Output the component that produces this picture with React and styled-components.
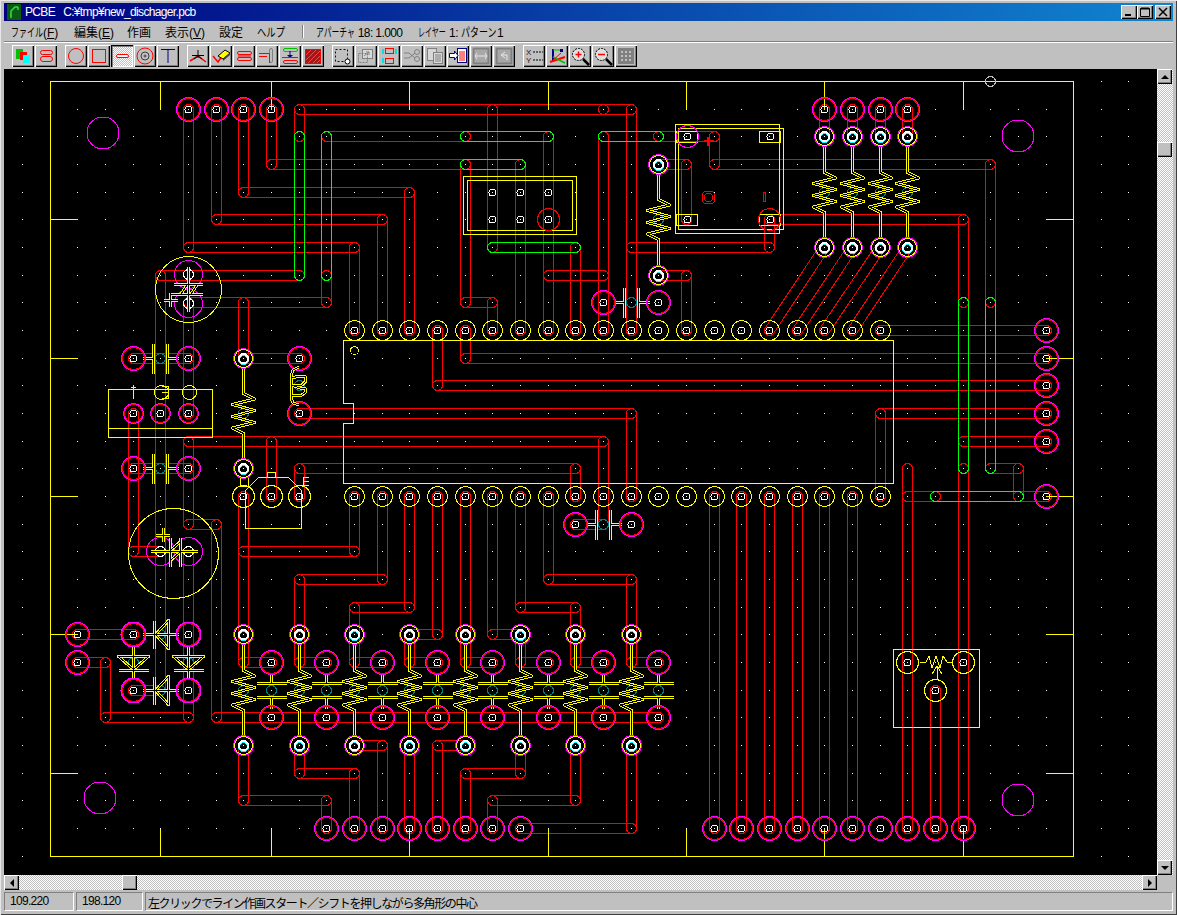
import React from 'react';
import styled, { createGlobalStyle } from 'styled-components';

const GlobalStyle = createGlobalStyle`
  html, body {
    margin: 0;
    padding: 0;
    background: #c0c0c0;
    overflow: hidden;
  }
  * { box-sizing: border-box; }
`;

const UI_FONT = `"Liberation Sans", "Noto Sans CJK JP", sans-serif`;
const CHECKER = `repeating-conic-gradient(#c0c0c0 0 25%, #ffffff 0 50%) 0 0 / 2px 2px`;

const Frame = styled.div`
  width: 1177px;
  height: 915px;
  padding: 3px 4px 4px;
  background: #c0c0c0;
  box-shadow: inset 1px 1px 0 #e8e8e8, inset -1px -1px 0 #404040;
  font: 12px ${UI_FONT};
  color: #000;
  display: flex;
  flex-direction: column;
`;

const TitleBar = styled.div`
  height: 18px;
  display: flex;
  align-items: center;
  padding: 0 2px 0 3px;
  color: #fff;
  background: linear-gradient(90deg, #000080, #1084d0);
`;

const TitleIcon = styled.svg`
  width: 14px;
  height: 16px;
  flex: none;
  margin-right: 4px;
`;

const TitleText = styled.span`
  white-space: pre;
  font-size: 12px;
  letter-spacing: -0.65px;
  flex: 1;
`;

const WinButton = styled.button`
  width: 16px;
  height: 14px;
  padding: 0;
  margin-left: ${p => p.$gap || 0}px;
  border: 0;
  background: #c0c0c0;
  display: flex;
  align-items: center;
  justify-content: center;
  box-shadow: inset 1px 1px 0 #fff, inset -1px -1px 0 #000, inset -2px -2px 0 #808080;
`;

const MenuBar = styled.div`
  height: 20px;
  display: flex;
  align-items: center;
  padding-left: 7px;
  white-space: nowrap;
`;

const MenuItem = styled.span`
  width: ${p => p.$width}px;
  flex: none;
  letter-spacing: ${p => p.$spacing || 0}px;
`;

/* the reference's katakana is much narrower than any installed face */
const Kana = styled.span`
  display: inline-block;
  width: ${p => p.$width}px;
  letter-spacing: 0;
  transform: scaleX(${p => p.$width / (p.$chars * 12)});
  transform-origin: left center;
`;

const MenuDivider = styled.span`
  width: 2px;
  height: 13px;
  margin-right: 12px;
  flex: none;
  border-left: 1px solid #808080;
  border-right: 1px solid #fff;
`;

const Rule = styled.div`
  height: 2px;
  border-top: 1px solid #808080;
  border-bottom: 1px solid #fff;
`;

const Toolbar = styled.div`
  height: 26px;
  display: flex;
  align-items: center;
  gap: 8px;
  padding-left: 8px;
`;

const ToolGroup = styled.div`
  display: flex;
  gap: 1px;
`;

const ToolButton = styled.div`
  width: 22px;
  height: 22px;
  display: flex;
  align-items: center;
  justify-content: center;
  background: ${p => (p.$pressed ? CHECKER : '#c0c0c0')};
  box-shadow: ${p =>
    p.$pressed
      ? 'inset 1px 1px 0 #000, inset 2px 2px 0 #808080, inset -1px -1px 0 #fff'
      : 'inset 1px 1px 0 #fff, inset -1px -1px 0 #000, inset -2px -2px 0 #808080'};
`;

const ToolSvg = styled.svg`
  width: 22px;
  height: 22px;
  display: block;
`;

const Workspace = styled.div`
  display: grid;
  grid-template-columns: 1153px 16px;
  grid-template-rows: 806px 15px;
`;

const Canvas = styled.div`
  background: #000;
  overflow: hidden;
`;

const Board = styled.svg`
  display: block;
  width: 1153px;
  height: 806px;
  shape-rendering: crispEdges;
`;

const ScrollBar = styled.div`
  display: flex;
  flex-direction: ${p => (p.$vertical ? 'column' : 'row')};
  background: ${CHECKER};
`;

const ScrollTrack = styled.div`
  flex: 1;
  display: flex;
  flex-direction: ${p => (p.$vertical ? 'column' : 'row')};
  padding: ${p => (p.$vertical ? `${p.$offset}px 0 0 0` : `0 0 0 ${p.$offset}px`)};
`;

const ScrollThumb = styled.div`
  width: 15px;
  height: 15px;
  flex: none;
  background: #c0c0c0;
  box-shadow: inset 1px 1px 0 #fff, inset -1px -1px 0 #000, inset -2px -2px 0 #808080;
`;

const ScrollButton = styled(ScrollThumb)`
  display: flex;
  align-items: center;
  justify-content: center;
  &::before {
    content: '';
    width: 0;
    height: 0;
    border-style: solid;
    border-color: transparent;
    ${p => p.$dir === 'up' && 'border-width: 0 4px 4px; border-bottom-color: #000;'}
    ${p => p.$dir === 'down' && 'border-width: 4px 4px 0; border-top-color: #000;'}
    ${p => p.$dir === 'left' && 'border-width: 4px 4px 4px 0; border-right-color: #000;'}
    ${p => p.$dir === 'right' && 'border-width: 4px 0 4px 4px; border-left-color: #000;'}
  }
`;

const Corner = styled.div`
  background: #c0c0c0;
`;

const StatusBar = styled.div`
  height: 19px;
  margin-top: 2px;
  display: flex;
  gap: 2px;
`;

const StatusPanel = styled.div`
  width: ${p => (p.$width ? `${p.$width}px` : 'auto')};
  flex: ${p => (p.$width ? 'none' : 1)};
  padding: 1px 0 0 ${p => p.$pad || 2}px;
  letter-spacing: ${p => p.$spacing || 0}px;
  white-space: nowrap;
  overflow: hidden;
  border-top: 1px solid #808080;
  border-left: 1px solid #808080;
  border-right: 1px solid #fff;
  border-bottom: 1px solid #fff;
`;

/* ---------- toolbar icons ---------- */

const R = '#ff0000';
const N = '#000080';
const G = '#808080';

const icons = {
  layers: (
    <>
      <rect x="4" y="4" width="7" height="10" fill="#00c000" />
      <rect x="8" y="7" width="7" height="8" fill={R} />
      <rect x="11" y="10" width="7" height="8" fill="#00ffff" />
    </>
  ),
  ovals: (
    <g fill="none" stroke={R}>
      <rect x="5.5" y="5.5" width="12" height="4" rx="2" />
      <rect x="5.5" y="11.5" width="12" height="5" rx="2.5" />
    </g>
  ),
  circle: <circle cx="11" cy="11" r="7.5" fill="none" stroke={R} />,
  square: <rect x="4.5" y="4.5" width="13" height="13" fill="none" stroke={R} />,
  track: <rect x="5.5" y="9.5" width="12" height="3" rx="1.5" fill="#fff" stroke={R} />,
  target: (
    <g fill="none">
      <circle cx="11" cy="11" r="8" stroke={R} />
      <circle cx="11" cy="11" r="4" stroke="#404040" />
      <circle cx="11" cy="11" r="1" stroke="#404040" />
    </g>
  ),
  text: <path d="M4 4.5H18M11 4V18" stroke={N} fill="none" />,
  corner: (
    <g fill="none">
      <path d="M3 16L11 11L19 17" stroke={R} strokeWidth="1.5" />
      <path d="M11 5V13M5 10.5H17M11 11L7 14M11 11L15 14" stroke="#000" />
    </g>
  ),
  erase: (
    <g>
      <path d="M3 11L8 17L12 11" fill="none" stroke={R} strokeWidth="1.5" />
      <path d="M8 11L15 5L20 8L13 14Z" fill="#ffff00" stroke="#000" />
      <path d="M13 14L20 8V10L13 16Z" fill="#404040" />
    </g>
  ),
  lines: (
    <g fill="none" stroke={R}>
      <rect x="4.5" y="6.5" width="14" height="3" rx="1.5" />
      <rect x="4.5" y="12.5" width="14" height="3" rx="1.5" />
      <path d="M5 11H18" />
    </g>
  ),
  bend: (
    <g fill="none">
      <rect x="13.5" y="3.5" width="3" height="14" rx="1.5" stroke={G} />
      <path d="M3 8.5H13.5V18M3 11.5H11" stroke={R} />
    </g>
  ),
  swap: (
    <g fill="none">
      <rect x="4.5" y="3.5" width="14" height="3" rx="1.5" stroke="#00c000" />
      <path d="M11 6V12" stroke={N} />
      <path d="M8 10H14L11 13Z" fill={N} />
      <path d="M3 12.5H19" stroke={R} />
      <rect x="4.5" y="15.5" width="14" height="3" rx="1.5" stroke={R} />
    </g>
  ),
  hatch: (
    <g fill="none">
      <rect x="3.5" y="4.5" width="15" height="14" fill="#a01818" stroke={R} />
      <path d="M4 10L9 5M4 15L14 5M6 18L18 6M11 18L18 11M15 18L18 15" stroke="#ff4040" />
    </g>
  ),
  select: (
    <g fill="none">
      <rect x="3.5" y="4.5" width="12" height="12" stroke={N} strokeDasharray="2 2" />
      <circle cx="15.5" cy="16.5" r="2.5" fill="#fff" stroke="#000" />
    </g>
  ),
  move: (
    <g fill="none" stroke={G}>
      <rect x="7.5" y="4.5" width="10" height="9" fill="#fff" fillOpacity=".4" />
      <rect x="3.5" y="8.5" width="9" height="9" strokeDasharray="2 1" />
      <path d="M9 11L14 7M11 7H14V10" />
    </g>
  ),
  mirror: (
    <g fill="none">
      <rect x="7.5" y="3.5" width="8" height="5" stroke={R} />
      <rect x="7.5" y="13.5" width="8" height="5" stroke={R} />
      <path d="M5 4V9M5 13V18M18 4V9" stroke="#00e0e0" strokeWidth="2" />
    </g>
  ),
  cut: (
    <g fill="none" stroke={G}>
      <circle cx="16" cy="7" r="2.5" />
      <circle cx="16" cy="14" r="2.5" />
      <path d="M3 8H8L14 13M3 13H8L14 8" />
    </g>
  ),
  copy: (
    <g fill="#d8d8d8" stroke={G}>
      <rect x="3.5" y="3.5" width="9" height="12" />
      <rect x="9.5" y="7.5" width="9" height="11" />
      <path d="M11 10H17M11 12H17M11 14H17M11 16H17" />
    </g>
  ),
  paste: (
    <g>
      <rect x="10.5" y="3.5" width="9" height="14" fill="#fff" stroke={N} />
      <path d="M12 7H18M12 9H18M12 11H18M12 13H18M12 15H18" stroke={R} />
      <path d="M2.5 8.5H7.5V6L11 10.5L7.5 15V12.5H2.5Z" fill="#fff" stroke={N} />
    </g>
  ),
  flip: (
    <g fill="none">
      <rect x="3.5" y="3.5" width="15" height="15" fill="#a8a8a8" stroke={G} strokeWidth="2" />
      <path d="M5 11H17M7 8L5 11L7 14M15 8L17 11L15 14" stroke="#e8e8e8" />
    </g>
  ),
  undo: (
    <g fill="none">
      <rect x="3.5" y="3.5" width="15" height="15" fill="#a8a8a8" stroke={G} strokeWidth="2" />
      <path d="M12 7L8 10L12 13M9 10H14V15" stroke="#e8e8e8" />
    </g>
  ),
  coords: (
    <g>
      <text x="3" y="10" fontFamily="Liberation Sans" fontSize="8" fill="#202020">X</text>
      <text x="3" y="18" fontFamily="Liberation Sans" fontSize="8" fill="#202020">Y</text>
      <path d="M10 7H20M10 15H20" stroke="#000" strokeDasharray="2 1" />
    </g>
  ),
  axes: (
    <g fill="none">
      <path d="M7 4V16" stroke={N} strokeWidth="2" />
      <path d="M7 5H15" stroke="#00c000" />
      <path d="M4 17L19 12" stroke={R} strokeWidth="2" />
      <path d="M7 12L19 18" stroke="#00c000" strokeWidth="1.5" />
      <path d="M5 17L15 8" stroke={R} />
      <rect x="14" y="4" width="3" height="3" fill={N} />
    </g>
  ),
  zoomIn: (
    <g fill="none">
      <circle cx="9.5" cy="9.5" r="6" fill="#e0e0e0" stroke="#000" strokeDasharray="2 1" />
      <path d="M6.5 9.5H12.5M9.5 6.5V12.5" stroke={R} strokeWidth="1.5" />
      <path d="M14 14L20 20" stroke="#000" strokeWidth="2.5" />
    </g>
  ),
  zoomOut: (
    <g fill="none">
      <circle cx="9.5" cy="9.5" r="6" fill="#e0e0e0" stroke="#000" strokeDasharray="2 1" />
      <path d="M6 9.5H13" stroke={R} strokeWidth="1.5" />
      <path d="M14 14L20 20" stroke="#000" strokeWidth="2.5" />
    </g>
  ),
  grid: (
    <g>
      <rect x="3" y="3" width="16" height="16" fill="#808080" />
      <path d="M6 6h2v2h-2zM10 6h2v2h-2zM14 6h2v2h-2zM6 10h2v2h-2zM10 10h2v2h-2zM14 10h2v2h-2zM6 14h2v2h-2zM10 14h2v2h-2zM14 14h2v2h-2z" fill="#c0c0c0" />
    </g>
  ),
};

const TOOL_GROUPS = [
  ['layers', 'ovals'],
  ['circle', 'square', 'track', 'target', 'text'],
  ['corner', 'erase', 'lines', 'bend', 'swap', 'hatch'],
  ['select', 'move', 'mirror', 'cut', 'copy', 'paste', 'flip', 'undo'],
  ['coords', 'axes', 'zoomIn', 'zoomOut', 'grid'],
];

/* ---------- board data, in grid units of the dotted grid ---------- */

const X = i => Math.floor(354.5 + 27.66 * i) + 0.5;
const Y = j => Math.floor(330.5 + 27.67 * j) + 0.5;

const RED_TRACKS = [
  [[-6, -8], [-6, -3], [0, -3], [0, 0]],
  [[-5, -8], [-5, -4], [1, -4], [1, 0]],
  [[-4, -8], [-4, -5], [2, -5], [2, 0]],
  [[-3, -8], [-3, -6], [4, -6], [4, -1], [5, -1], [5, 0]],
  [[-2, -7], [-2, -8], [10, -8], [10, 0]],
  [[9, -8], [9, -8]],
  [[-1, -7], [4, -7]],
  [[7, -7], [7, 0]],
  [[6, -6], [6, 0]],
  [[-7, -2], [-2, -2]],
  [[-7, -2], [-7, 13], [-8, 13]],
  [[-6, -1], [-1, -1], [-1, -2]],
  [[-6, -1], [-6, 3]],
  [[-4, -1], [-4, 1], [-2, 1]],
  [[-8, 1], [-6, 1]],
  [[-8, 5], [-6, 5]],
  [[-8, 3], [-8, 8], [-7, 8]],
  [[-6, 4], [9, 4], [9, 7], [8, 7]],
  [[-6, 4], [-6, 7], [-5, 7], [-5, 14], [11, 14]],
  [[-2, 3], [10, 3], [10, 6]],
  [[-2, 5], [8, 5], [8, 6]],
  [[-3, 4], [-3, 6]],
  [[-2, 5], [-2, 6]],
  [[0, 6], [0, 8], [-4, 8]],
  [[-4, 6], [-4, 11]],
  [[1, 6], [1, 9], [-2, 9], [-2, 11]],
  [[2, 6], [2, 10], [0, 10], [0, 11]],
  [[3, 6], [3, 11], [2, 11]],
  [[4, 6], [4, 11]],
  [[5, 6], [5, 11], [6, 11]],
  [[6, 6], [6, 10], [8, 10], [8, 11]],
  [[7, 6], [7, 9], [10, 9], [10, 11]],
  [[-10, 11], [-8, 11]],
  [[-10, 12], [-9, 12], [-9, 14], [-6, 14], [-6, 8]],
  [[-4, 15], [-4, 17], [-1, 17], [-1, 18]],
  [[-2, 15], [-2, 16], [0, 16], [0, 18]],
  [[0, 15], [1, 15], [1, 18]],
  [[2, 15], [2, 18]],
  [[4, 15], [3, 15], [3, 18]],
  [[6, 15], [6, 16], [4, 16], [4, 18]],
  [[8, 15], [8, 17], [5, 17], [5, 18]],
  [[10, 15], [10, 18], [6, 18]],
  [[11, -7], [13, -7], [13, -6], [23, -6], [23, -1]],
  [[15, -4], [22, -4], [22, -1]],
  [[15, -4], [15, -3], [10, -3]],
  [[11, -6], [12, -6], [12, -4]],
  [[11, -2], [12, -2], [12, 0]],
  [[7, -2], [9, -2]],
  [[8, -3], [8, 0]],
  [[5, -8], [5, -3]],
  [[9, -7], [9, 0]],
  [[4, 0], [4, 1], [25, 1]],
  [[3, 0], [3, 2], [25, 2]],
  [[19, 0], [25, 0]],
  [[25, 3], [19, 3], [19, 6]],
  [[22, 4], [25, 4]],
  [[23, 5], [24, 5], [24, 6], [25, 6]],
  [[20, 6], [21, 6]],
  [[20, 5], [20, 18]],
  [[22, 5], [22, 18]],
  [[21, 13], [21, 18]],
  [[13, 6], [13, 18]],
  [[14, 6], [14, 18]],
  [[15, 6], [15, 18]],
  [[16, 6], [16, 18]],
  [[17, 6], [17, 18]],
  [[18, 6], [18, 18]],
  [[17, -8], [17, -7]],
  [[18, -8], [18, -7]],
  [[19, -8], [19, -7]],
  [[20, -8], [20, -7]],
  [[17, -3], [15, 0]],
  [[18, -3], [16, 0]],
  [[19, -3], [17, 0]],
  [[20, -3], [18, 0]],
  ...[-4, -2, 0, 2, 4, 6, 8, 10].map(i => [[i, 11], [i, 12], [i + 1, 12]]),
];

const GREEN_TRACKS = [
  [[-2, -7], [-2, -2]],
  [[-1, -7], [-1, -2]],
  [[4, -7], [7, -7]],
  [[4, -6], [6, -6]],
  [[9, -7], [11, -7]],
  [[5, -3], [8, -3]],
  [[22, -1], [22, 5]],
  [[23, -1], [23, 5]],
  [[21, 6], [24, 6]],
];

const capsule = (x1, y1, x2, y2, r = 5) => {
  if (x1 === x2 && y1 === y2) {
    return `M${x1 - r} ${y1}A${r} ${r} 0 1 0 ${x1 + r} ${y1}A${r} ${r} 0 1 0 ${x1 - r} ${y1}Z`;
  }
  const len = Math.hypot(x2 - x1, y2 - y1);
  const nx = (-(y2 - y1) / len) * r;
  const ny = ((x2 - x1) / len) * r;
  return (
    `M${x1 + nx} ${y1 + ny}L${x2 + nx} ${y2 + ny}A${r} ${r} 0 0 0 ${x2 - nx} ${y2 - ny}` +
    `L${x1 - nx} ${y1 - ny}A${r} ${r} 0 0 0 ${x1 + nx} ${y1 + ny}Z`
  );
};

const trackPath = list =>
  list
    .map(pts =>
      pts
        .slice(1)
        .map((p, n) => capsule(X(pts[n][0]), Y(pts[n][1]), X(p[0]), Y(p[1])))
        .join('')
    )
    .join('');

let dots = '';
for (let i = -12; i <= 28; i++) {
  for (let j = -9; j <= 19; j++) {
    dots += `M${Math.floor(X(i))} ${Math.floor(Y(j))}h1v1h-1z`;
  }
}

const YEL = '#ffff00';
const MAG = '#ff00ff';
const TEAL = '#008080';

const range = (a, b, step = 1) => {
  const out = [];
  for (let v = a; v <= b; v += step) out.push(v);
  return out;
};

const MagentaPad = ({ x, y, big = 12, thick = false }) => (
  <g fill="none">
    <circle cx={x} cy={y} r={big} stroke={MAG} strokeWidth={thick ? 2 : 1} />
    <circle cx={x} cy={y} r={big - 1} stroke={R} />
    <circle cx={x} cy={y} r="3.5" stroke="#fff" />
  </g>
);

const LeadPad = ({ x, y }) => (
  <g fill="none">
    <circle cx={x} cy={y} r="10" stroke={MAG} />
    <circle cx={x} cy={y} r="9" stroke={YEL} />
    <circle cx={x} cy={y + 1} r="4.5" stroke="#00ffff" strokeWidth="2" />
    <circle cx={x} cy={y} r="4.5" stroke="#fff" strokeWidth="2" />
  </g>
);

const YellowPad = ({ x, y, r = 10 }) => (
  <g fill="none">
    <circle cx={x} cy={y} r={r} stroke={YEL} />
    <circle cx={x} cy={y} r="3.5" stroke="#fff" />
  </g>
);

const WhiteRing = ({ x, y }) => <circle cx={x} cy={y} r="3.5" fill="none" stroke="#fff" />;

const Ribbon = ({ d }) => (
  <g fill="none" strokeLinejoin="round">
    <path d={d} stroke={YEL} strokeWidth="3" />
    <path d={d} stroke="#000" strokeWidth="1" />
  </g>
);

const Teal = ({ x, y }) => <circle cx={x} cy={y} r="5" fill="none" stroke={TEAL} />;

const Resistor = ({ x, y }) => (
  <g>
    <Teal x={x} y={y} />
    <Ribbon
      d={`M${x} ${y - 46}V${y - 20}L${x + 11} ${y - 14.5}L${x - 11} ${y - 9}L${x + 11} ${y - 3}L${x - 11} ${y + 3}L${x + 11} ${y + 9}L${x - 11} ${y + 14.5}L${x} ${y + 20}V${y + 46}`}
    />
  </g>
);

const CapH = ({ x, y }) => (
  <g>
    <Teal x={x} y={y} />
    <Ribbon d={`M${x - 18} ${y}H${x - 7}M${x + 7} ${y}H${x + 18}M${x - 7} ${y - 15}V${y + 15}M${x + 7} ${y - 15}V${y + 15}`} />
  </g>
);

const CapV = ({ x, y }) => (
  <g>
    <Teal x={x} y={y} />
    <Ribbon d={`M${x} ${y - 18}V${y - 7}M${x} ${y + 7}V${y + 18}M${x - 15} ${y - 7}H${x + 15}M${x - 15} ${y + 7}H${x + 15}`} />
  </g>
);

const DiodeH = ({ x, y }) => (
  <g>
    <Teal x={x} y={y} />
    <Ribbon d={`M${x - 18} ${y}H${x + 18}M${x - 6} ${y - 14}V${y + 14}M${x - 5} ${y}L${x + 8} ${y - 14}V${y + 14}Z`} />
  </g>
);

const DiodeV = ({ x, y }) => (
  <g>
    <Teal x={x} y={y} />
    <Ribbon d={`M${x} ${y - 16}V${y + 16}M${x - 15} ${y + 8}H${x + 15}M${x} ${y + 7}L${x - 15} ${y - 6}H${x + 15}Z`} />
  </g>
);

const PcbDrawing = () => {
  const tickCols = [-7, -3, 2, 7, 12, 17, 22];
  const tickRows = [-4, 1, 6, 11, 16];
  return (
    <Board viewBox="4 69 1153 806">
      <path d={dots} fill="#fff" />
      <path d={trackPath(RED_TRACKS)} fill="none" stroke={R} />
      <path d={trackPath(GREEN_TRACKS)} fill="none" stroke="#00ff00" />

      {/* board edge and mounting holes */}
      <g fill="none" stroke={YEL}>
        <rect x="50.5" y="81.5" width="1023" height="775" />
        {tickCols.map(i => (
          <path key={i} d={`M${X(i)} 81V${Y(-8)}M${X(i)} ${Y(18)}V856`} />
        ))}
        {tickRows.map(j => (
          <path key={j} d={`M51 ${Y(j)}H78M1046 ${Y(j)}H1073`} />
        ))}
      </g>
      <g fill="none" stroke={MAG}>
        <circle cx="103" cy="133" r="16" />
        <circle cx="1018" cy="136" r="16" />
        <circle cx="100" cy="798" r="16" />
        <circle cx="1018" cy="800" r="16" />
      </g>
      <circle cx="990.5" cy="81.5" r="5" fill="none" stroke="#c0c0c0" />

      {/* IC body */}
      <path
        d="M343.5 340.5H893.5V483.5H343.5V423.5H353.5V403.5H343.5Z"
        fill="none"
        stroke={YEL}
      />
      <circle cx="354.5" cy="350.5" r="4" fill="none" stroke={YEL} />
      {range(0, 19).map(i => (
        <g key={i}>
          <YellowPad x={X(i)} y={Y(0)} />
          <YellowPad x={X(i)} y={Y(6)} />
        </g>
      ))}

      {/* connector */}
      <g fill="none" stroke={YEL}>
        <rect x="463.5" y="176.5" width="113" height="58" />
        <rect x="467.5" y="180.5" width="105" height="50" />
      </g>
      {[5, 6, 7].map(i => (
        <g key={i}>
          <WhiteRing x={X(i)} y={Y(-5)} />
          <WhiteRing x={X(i)} y={Y(-4)} />
        </g>
      ))}
      <circle cx={X(7)} cy={Y(-4)} r="11" fill="none" stroke={R} />

      {/* relay */}
      <g fill="none" stroke={YEL}>
        <rect x="675.5" y="124.5" width="104" height="109" />
        <rect x="678.5" y="128.5" width="105" height="101" />
        <rect x="676.5" y="131.5" width="21" height="11" />
        <rect x="759.5" y="131.5" width="21" height="11" />
        <rect x="676.5" y="214.5" width="21" height="11" />
        <rect x="759.5" y="214.5" width="21" height="11" />
      </g>
      <circle cx="687.5" cy="136.5" r="11" fill="none" stroke={MAG} />
      <circle cx="769.5" cy="219.5" r="11" fill="none" stroke={R} />
      {[[687.5, 136.5], [770.5, 136.5], [687.5, 219.5], [770.5, 219.5]].map(([x, y]) => (
        <WhiteRing key={`${x}-${y}`} x={x} y={y} />
      ))}
      <g fill="none" stroke={R}>
        <path d="M704.5 191.5H712.5L714.5 193.5V201.5L712.5 203.5H704.5L702.5 201.5V193.5Z" />
        <path d="M706.5 193.5H710.5L712.5 195.5V199.5L710.5 201.5H706.5L704.5 199.5V195.5Z" />
        <rect x="763.5" y="192.5" width="2" height="9" />
        <path d="M704 141H714M708 137V146" strokeWidth="2" />
      </g>

      {/* left side parts */}
      <circle cx="188.5" cy="289.5" r="33" fill="none" stroke={YEL} />
      <circle cx="188.5" cy="274.5" r="14" fill="none" stroke={MAG} />
      <circle cx="188.5" cy="303.5" r="14" fill="none" stroke={MAG} />
      <circle cx="188.5" cy="274.5" r="5" fill="none" stroke="#fff" />
      <circle cx="188.5" cy="303.5" r="5" fill="none" stroke="#fff" />
      <Ribbon d="M188.5 267V312M174 284.5H203M170 294.5H203M181 294L187 285M191 294L197 285M170 293V307M164 300H178" />

      <circle cx="173.5" cy="553.5" r="45" fill="none" stroke={YEL} />
      <circle cx="160.5" cy="551.5" r="14" fill="none" stroke={MAG} />
      <circle cx="188.5" cy="551.5" r="14" fill="none" stroke={MAG} />
      <circle cx="160.5" cy="551.5" r="5" fill="none" stroke="#fff" />
      <circle cx="188.5" cy="551.5" r="5" fill="none" stroke="#fff" />
      <Ribbon d="M151 551.5H198M170.5 538V567M180.5 538V567M171 560L180 552M171 550L180 542M163 528V542M156 535H170" />

      <CapH x={X(-7)} y={Y(1)} />
      <CapH x={X(-7)} y={Y(5)} />
      <CapH x={X(10)} y={Y(-1)} />
      <CapH x={X(9)} y={Y(7)} />
      {[[-8, 1], [-6, 1], [-8, 5], [-6, 5], [9, -1], [11, -1], [8, 7], [10, 7], [-2, 1], [-2, 3]].map(([i, j]) => (
        <MagentaPad key={`${i}-${j}`} x={X(i)} y={Y(j)} />
      ))}

      <g fill="none" stroke={YEL}>
        <rect x="108.5" y="389.5" width="104" height="48" />
        <path d="M108 428.5H213M133.5 385V399M131 387H136" />
        <circle cx="161.5" cy="392.5" r="7" />
        <circle cx="189.5" cy="392.5" r="7" />
        <path d="M162 386H168V398H162M162 392H168" />
      </g>
      {[-8, -7, -6].map(i => (
        <MagentaPad key={i} x={X(i)} y={Y(3)} big={10} />
      ))}

      {/* inductor */}
      <Teal x={X(-2)} y={385.5} />
      <Ribbon d="M299 367L293 370L291 376V398L293 403L299 405M291 378L300 376H305L306 381L302 385H291L300 388H305L306 392L302 395H291" />

      {/* regulator */}
      <g fill="none" stroke={YEL}>
        <path d="M245.5 490.5L258.5 477.5H288.5L301.5 490.5V528.5H245.5Z" />
        <path d="M267.5 477V472H275.5V477M240.5 478V486H248.5V478M303 477H309M303 481H309M303 485H309M303 477V485" />
      </g>
      {[-4, -3, -2].map(i => (
        <YellowPad key={i} x={X(i)} y={Y(6)} r={11} />
      ))}

      {/* diodes */}
      <DiodeH x={X(-7)} y={Y(11)} />
      <DiodeH x={X(-7)} y={Y(13)} />
      <DiodeV x={X(-8)} y={Y(12)} />
      <DiodeV x={X(-6)} y={Y(12)} />
      {[[-10, 11], [-10, 12]].map(([i, j]) => (
        <MagentaPad key={`${i}-${j}`} x={X(i)} y={Y(j)} />
      ))}
      {[[-8, 11], [-6, 11], [-8, 13], [-6, 13]].map(([i, j]) => (
        <MagentaPad key={`${i}-${j}`} x={X(i)} y={Y(j)} thick />
      ))}

      {/* resistor bank */}
      <Resistor x={X(-4)} y={Y(3)} />
      <Resistor x={X(11)} y={Y(-4)} />
      {range(17, 20).map(i => (
        <Resistor key={i} x={X(i)} y={Y(-5)} />
      ))}
      {range(-4, 10, 2).map(i => (
        <Resistor key={i} x={X(i)} y={Y(13)} />
      ))}
      {range(-3, 11, 2).map(i => (
        <CapV key={i} x={X(i)} y={Y(13)} />
      ))}
      {range(-3, 11, 2).map(i => (
        <g key={i}>
          <MagentaPad x={X(i)} y={Y(12)} />
          <MagentaPad x={X(i)} y={Y(14)} />
        </g>
      ))}
      {range(-4, 10, 2).map(i => (
        <g key={i}>
          <LeadPad x={X(i)} y={Y(11)} />
          <LeadPad x={X(i)} y={Y(15)} />
        </g>
      ))}
      {[[-4, 1], [-4, 5], [11, -6], [11, -2]].map(([i, j]) => (
        <LeadPad key={`${i}-${j}`} x={X(i)} y={Y(j)} />
      ))}
      {range(17, 20).map(i => (
        <g key={i}>
          <MagentaPad x={X(i)} y={Y(-8)} />
          <LeadPad x={X(i)} y={Y(-7)} />
          <LeadPad x={X(i)} y={Y(-3)} />
        </g>
      ))}

      {/* pad rows */}
      {range(-6, -3).map(i => (
        <MagentaPad key={i} x={X(i)} y={Y(-8)} />
      ))}
      {range(-1, 6).map(i => (
        <MagentaPad key={i} x={X(i)} y={Y(18)} />
      ))}
      {range(13, 22).map(i => (
        <MagentaPad key={i} x={X(i)} y={Y(18)} />
      ))}
      {[0, 1, 2, 3, 4, 6].map(j => (
        <MagentaPad key={j} x={X(25)} y={Y(j)} />
      ))}

      {/* trimmer */}
      <g fill="none" stroke={YEL}>
        <rect x="893.5" y="649.5" width="86" height="78" />
        <path d="M920 662H926L929 656L932 668L936 656L940 668L943 656L947 662H953" />
        <path d="M937 679V667M932 674L937 666L942 674" />
      </g>
      <YellowPad x={X(20)} y={Y(12)} r={11} />
      <YellowPad x={X(22)} y={Y(12)} r={11} />
      <YellowPad x={X(21)} y={Y(13)} r={11} />
    </Board>
  );
};

const App = () => (
  <>
    <GlobalStyle />
    <Frame>
      <TitleBar>
        <TitleIcon viewBox="0 0 14 16">
          <rect width="14" height="16" fill="#0a5a14" />
          <path d="M4 14V7L8 3H11M4 11H3M11 3V6" fill="none" stroke="#30e040" strokeWidth="1.5" />
        </TitleIcon>
        <TitleText>{'PCBE   C:¥tmp¥new_dischager.pcb'}</TitleText>
        <WinButton aria-label="最小化">
          <svg width="10" height="10"><rect x="1" y="7" width="6" height="2" /></svg>
        </WinButton>
        <WinButton aria-label="最大化">
          <svg width="10" height="10"><path d="M0.5 1.5H9.5V9.5H0.5ZM1 1V2H9V1Z" fill="none" stroke="#000" /></svg>
        </WinButton>
        <WinButton $gap={2} aria-label="閉じる">
          <svg width="10" height="10"><path d="M1 1L9 9M9 1L1 9" stroke="#000" strokeWidth="1.5" /></svg>
        </WinButton>
      </TitleBar>

      <MenuBar>
        <MenuItem $width={63}><Kana $width={32} $chars={4}>ファイル</Kana>(<u>F</u>)</MenuItem>
        <MenuItem $width={53}>編集(<u>E</u>)</MenuItem>
        <MenuItem $width={38}>作画</MenuItem>
        <MenuItem $width={54}>表示(<u>V</u>)</MenuItem>
        <MenuItem $width={38}>設定</MenuItem>
        <MenuItem $width={45}><Kana $width={28} $chars={3}>ヘルプ</Kana></MenuItem>
        <MenuDivider />
        <MenuItem $width={102} $spacing={-0.6}><Kana $width={39} $chars={5}>アパーチャ</Kana> 18: 1.000</MenuItem>
        <MenuItem $width={110} $spacing={-0.4}><Kana $width={28} $chars={4}>レイヤー</Kana> 1: <Kana $width={36} $chars={4}>パターン</Kana>1</MenuItem>
      </MenuBar>
      <Rule />

      <Toolbar>
        {TOOL_GROUPS.map(group => (
          <ToolGroup key={group[0]}>
            {group.map(name => (
              <ToolButton key={name} $pressed={name === 'track'}>
                <ToolSvg viewBox="0 0 22 22">{icons[name]}</ToolSvg>
              </ToolButton>
            ))}
          </ToolGroup>
        ))}
      </Toolbar>

      <Workspace>
        <Canvas>
          <PcbDrawing />
        </Canvas>
        <ScrollBar $vertical>
          <ScrollButton $dir="up" />
          <ScrollTrack $vertical $offset={58}>
            <ScrollThumb />
          </ScrollTrack>
          <ScrollButton $dir="down" />
        </ScrollBar>
        <ScrollBar>
          <ScrollButton $dir="left" />
          <ScrollTrack $offset={103}>
            <ScrollThumb />
          </ScrollTrack>
          <ScrollButton $dir="right" />
        </ScrollBar>
        <Corner />
      </Workspace>

      <StatusBar>
        <StatusPanel $width={70} $pad={5} $spacing={-0.7}>109.220</StatusPanel>
        <StatusPanel $width={67} $pad={5} $spacing={-0.7}>198.120</StatusPanel>
        <StatusPanel $spacing={-1.4}>左クリックでライン作画スタート／シフトを押しながら多角形の中心</StatusPanel>
      </StatusBar>
    </Frame>
  </>
);

export default App;
